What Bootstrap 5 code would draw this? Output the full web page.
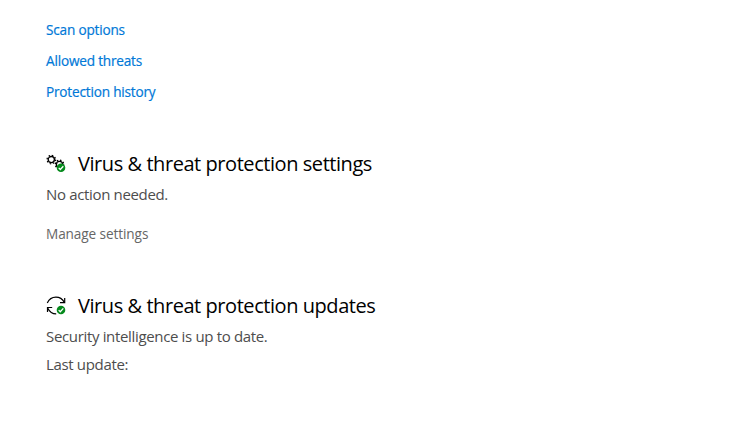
<!DOCTYPE html>
<html lang="en">
<head>
<meta charset="utf-8">
<meta name="viewport" content="width=device-width, initial-scale=1">
<title>Virus &amp; threat protection</title>
<link href="https://cdn.jsdelivr.net/npm/bootstrap@5.3.0/dist/css/bootstrap.min.css" rel="stylesheet">
<style>
body{font-family:"Segoe UI","Open Sans","Noto Sans",sans-serif;color:#000;background:#fff;overflow:hidden}
main{padding:20px 46px}
.links{gap:11px}
.act{font-size:13.6px;line-height:20px;letter-spacing:-.19px;color:#0078d7;white-space:nowrap}
.links .act{-webkit-text-stroke:.2px #0078d7}
.act.muted{color:#666;letter-spacing:-.09px}
.head{font-size:20px;line-height:28px;letter-spacing:-.44px;gap:12px;white-space:nowrap}
.txt{font-size:15px;line-height:20px;letter-spacing:-.34px;color:#4d4d4d;white-space:nowrap}
.sect{margin-top:48px}
.sect .head{margin-bottom:6px}
.manage{margin-top:20px}
.updates{gap:8px}
.ico{width:20px;height:20px;flex:none}
</style>
</head>
<body>
<main>
<nav class="d-flex flex-column align-items-start links">
<a class="act text-decoration-none" href="#">Scan options</a>
<a class="act text-decoration-none" href="#">Allowed threats</a>
<a class="act text-decoration-none" href="#">Protection history</a>
</nav>
<section class="sect d-flex flex-column align-items-start">
<h2 class="head d-flex align-items-center fw-normal">
<svg class="ico" viewBox="0 0 20 20" fill="none" aria-hidden="true">
<g stroke="#000"><circle cx="5.3" cy="5.6" r="3.1" stroke-width="1.3"/><circle cx="5.3" cy="5.6" r="4.2" stroke-width="1.3" stroke-dasharray="1.5 1.8"/>
<circle cx="13.5" cy="10.4" r="3.1" stroke-width="1.3"/><circle cx="13.5" cy="10.4" r="4.2" stroke-width="1.3" stroke-dasharray="1.5 1.8"/></g>
<circle cx="15" cy="13.8" r="4.3" fill="#058a1c"/><path d="M12.7 13.9l1.6 1.6 3-3.3" stroke="#fff" stroke-width="1.3"/>
</svg>
<span>Virus &amp; threat protection settings</span></h2>
<p class="txt mb-0">No action needed.</p>
<a class="act muted manage text-decoration-none" href="#">Manage settings</a>
</section>
<section class="sect">
<h2 class="head d-flex align-items-center fw-normal">
<svg class="ico" viewBox="0 0 20 20" fill="none" aria-hidden="true">
<g stroke="#000" stroke-width="1.2"><path d="M1.300 7C3 3.200 6 1.100 9.900 1.100c3.600 0 6.600 1.800 8.300 5"/><path d="M18.700 2v4.600H14"/><path d="M1.500 16V11.500h4.700M1.800 12.200c1.700 3.600 4.700 5.700 8.400 5.700"/></g>
<circle cx="15" cy="14" r="4.300" fill="#058a1c"/><path d="M12.700 14.100l1.600 1.600 3-3.300" stroke="#fff" stroke-width="1.300"/>
</svg>
<span>Virus &amp; threat protection updates</span></h2>
<div class="updates d-flex flex-column">
<p class="txt mb-0">Security intelligence is up to date.</p>
<p class="txt mb-0">Last update:</p>
</div>
</section>
</main>
<script src="https://cdn.jsdelivr.net/npm/bootstrap@5.3.0/dist/js/bootstrap.bundle.min.js"></script>
</body>
</html>
